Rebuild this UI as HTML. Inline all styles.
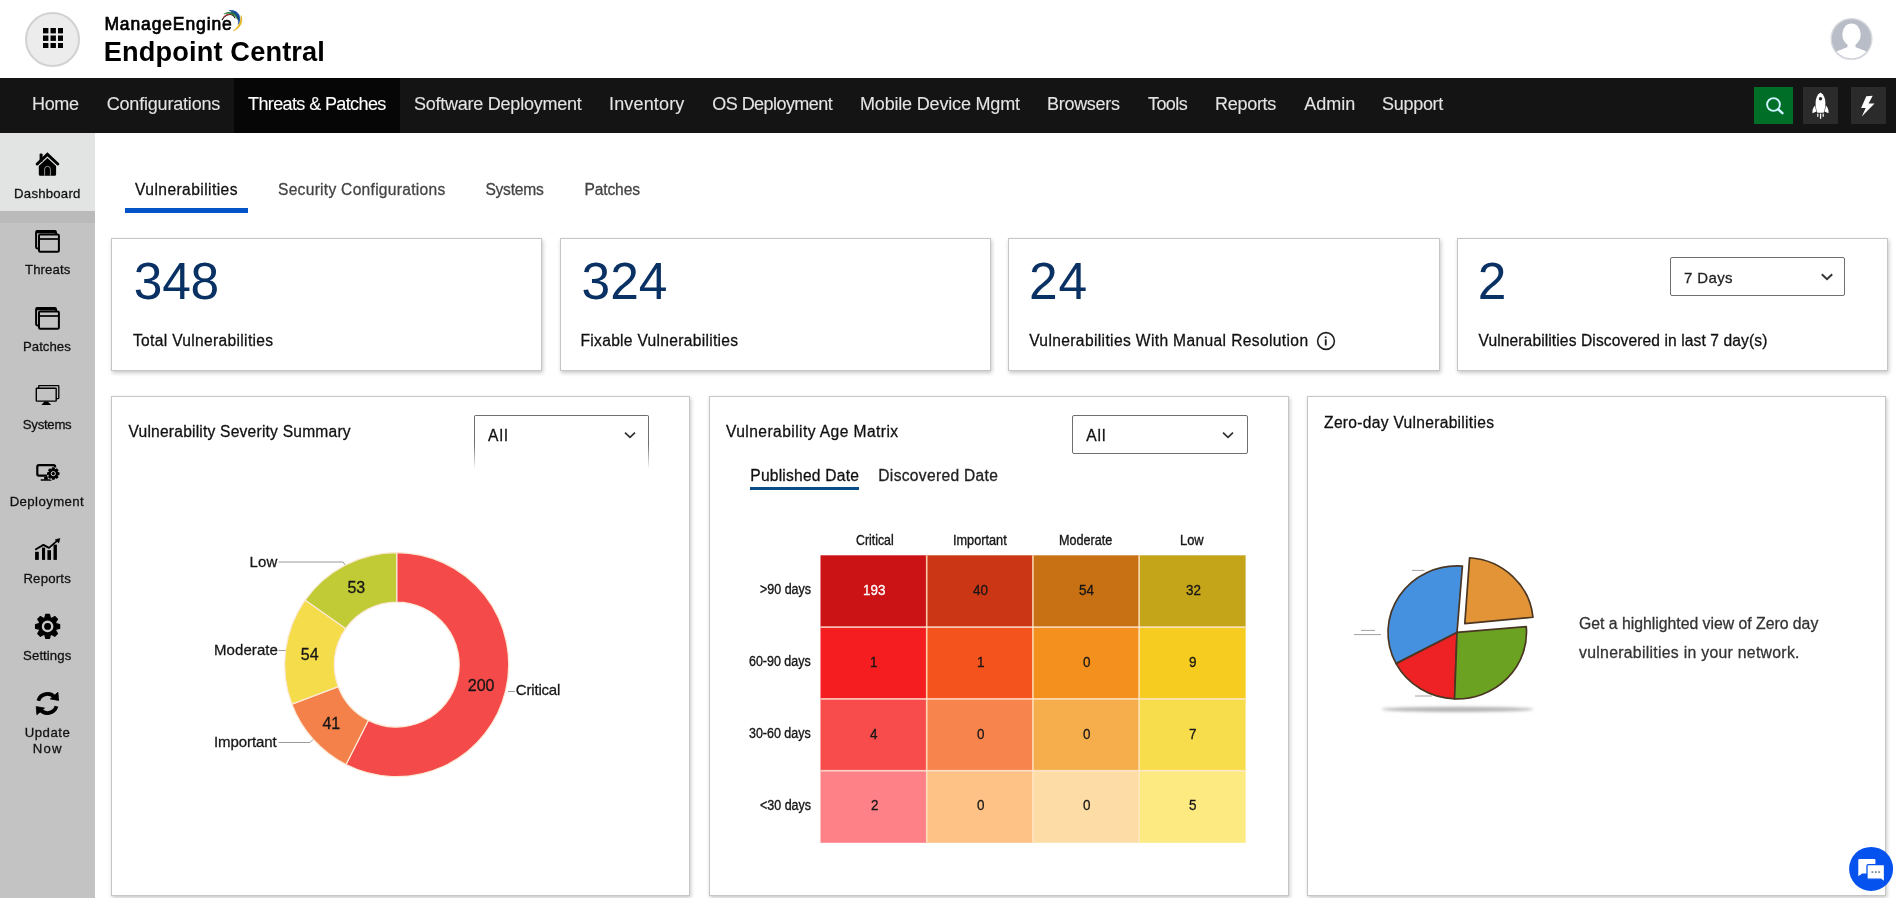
<!DOCTYPE html>
<html lang="en">
<head>
<meta charset="utf-8">
<title>Endpoint Central - Threats &amp; Patches</title>
<style>
*{box-sizing:border-box;margin:0;padding:0}
html,body{width:1896px;height:898px;overflow:hidden;background:#fff;font-family:"Liberation Sans",sans-serif;}
body{position:relative}
.abs{position:absolute}
.tx{position:absolute;white-space:nowrap;font-family:"Liberation Sans",sans-serif;}
header.top{position:absolute;left:0;top:0;width:1896px;height:78px;background:#fff}
nav.main{position:absolute;left:0;top:78px;width:1896px;height:54.6px;background:#141414}
nav.main .active{position:absolute;left:234px;top:0;width:166px;height:54.6px;background:#060606}
aside.side{position:absolute;left:0;top:132.6px;width:95.2px;height:766px;background:#c3c3c3}
aside.side .sel{position:absolute;left:0;top:0;width:95.2px;height:78.4px;background:#e2e3e3}
aside.side .band{position:absolute;left:0;top:78.4px;width:95.2px;height:12px;background:#bababa}
.card{position:absolute;background:#fff;border:1px solid #c6c6c6;box-shadow:1px 2px 4px rgba(0,0,0,.22)}
.sel-box{position:absolute;border:1px solid #6f6f6f;border-radius:2px;background:#fff}
.tabline{position:absolute;left:125px;top:208px;width:123px;height:5px;background:#0553c8}
.subline{position:absolute;left:750px;top:486.8px;width:109px;height:3.2px;background:#0a4d86}
</style>
</head>
<body>
<!-- ===== header ===== -->
<header class="top">
  <div class="abs" style="left:25px;top:12px;width:55px;height:55px;border-radius:50%;background:#ececec;border:2px solid #d2d2d2"></div>
  <svg class="abs" style="left:42.9px;top:28.1px" width="20.4" height="20.4" viewBox="0 0 20.4 20.4">
    <g fill="#000"><rect x="0" y="0" width="5.4" height="5.4"/><rect x="7.5" y="0" width="5.4" height="5.4"/><rect x="15" y="0" width="5.4" height="5.4"/>
    <rect x="0" y="7.5" width="5.4" height="5.4"/><rect x="7.5" y="7.5" width="5.4" height="5.4"/><rect x="15" y="7.5" width="5.4" height="5.4"/>
    <rect x="0" y="15" width="5.4" height="5.4"/><rect x="7.5" y="15" width="5.4" height="5.4"/><rect x="15" y="15" width="5.4" height="5.4"/></g>
  </svg>
  <svg class="abs" style="left:0;top:0" width="1896" height="898" viewBox="0 0 1896 898"><g stroke-linecap="round"><path d="M222.2 19.7 C224.3 15.6 228.6 13.6 231.8 14.7 C233.2 15.2 234.3 16.4 234.9 17.7" fill="none" stroke="#141414" stroke-width="1.1"/><path d="M223.3 17.3 C225.8 14.5 229.6 13.5 232.6 14.5" fill="none" stroke="#e3262a" stroke-width="1"/><path d="M224.2 13.8 C229 10.9 234.2 12.4 236.5 16.4 C237 17.4 237.3 18.4 237.4 19.4 C235.6 15.4 231.2 12.6 224.2 13.8 Z" fill="#1f7d3c" stroke="#1f7d3c" stroke-width="0.5"/><path d="M229.4 10.5 C235.6 9.5 240.4 14 240 19.4 C239.9 21.4 239.3 23 238.3 24.5 C239 19.4 237 13.2 229.4 10.5 Z" fill="#14549c" stroke="#14549c" stroke-width="0.5"/><path d="M231.2 12 C235 12.8 237.8 15.6 238.2 19.2" fill="none" stroke="#0e1a26" stroke-width="0.7"/><path d="M241.2 16 C243.6 22 240 28.6 233.2 30.8 C238.4 27.4 240.8 22.2 241.2 16 Z" fill="#e3b41c" stroke="#e3b41c" stroke-width="0.6"/></g></svg>
  <svg class="abs" style="left:1829px;top:16px" width="46" height="46" viewBox="0 0 46 46"><defs><clipPath id="avc"><circle cx="22.5" cy="23" r="19.4"/></clipPath></defs><circle cx="22.5" cy="23" r="20.4" fill="#b9bdc7" stroke="#d9dbdf" stroke-width="1.4"/><g clip-path="url(#avc)" fill="#fff"><ellipse cx="22.5" cy="18.5" rx="9.2" ry="11"/><path d="M18.5 26 H26.5 V31 C30 33 36 34 39 37 V46 H6 V37 C9 34 15 33 18.5 31 Z"/></g></svg>
</header>
<!-- ===== main nav ===== -->
<nav class="main">
  <div class="active"></div>
  <div class="abs" style="left:1754px;top:9.2px;width:39.2px;height:36.8px;background:#006e27"></div><div class="abs" style="left:1803.2px;top:9.2px;width:34.8px;height:36.8px;background:#2b2b2b"></div><div class="abs" style="left:1851px;top:9.2px;width:35px;height:36.8px;background:#2b2b2b"></div><svg class="abs" style="left:0;top:-78px" width="1896" height="140" viewBox="0 0 1896 140"><circle cx="1773.5" cy="104.5" r="6.4" fill="none" stroke="#cdf5ff" stroke-width="1.9"/><path d="M1778.3 109.4 L1782.4 113.2" stroke="#cdf5ff" stroke-width="2.5" stroke-linecap="round"/><g fill="#fff"><path d="M1820.5 92.6 C1823.8 94.6 1825.4 98.6 1825.4 103 C1825.4 107 1824.6 110.4 1823.6 112.8 H1817.4 C1816.4 110.4 1815.6 107 1815.6 103 C1815.6 98.6 1817.2 94.6 1820.5 92.6 Z"/><path d="M1815.2 105.4 C1813 107.4 1812.2 110 1812.5 113.2 L1816.6 111.6 C1815.8 109.6 1815.3 107.6 1815.2 105.4 Z"/><path d="M1825.8 105.4 C1828 107.4 1828.8 110 1828.5 113.2 L1824.4 111.6 C1825.2 109.6 1825.7 107.6 1825.8 105.4 Z"/><rect x="1819.9" y="113.6" width="1.3" height="5.2"/><rect x="1817.2" y="113.6" width="1.2" height="3.2"/><rect x="1822.6" y="113.6" width="1.2" height="3.2"/></g><circle cx="1820.5" cy="98.8" r="1.7" fill="#2b2b2b"/><path d="M1866.3 96.2 L1872.7 95.8 L1868.6 103.6 L1874.5 103.6 L1861.8 116.4 L1865.7 108 L1861.1 108 Z" fill="#fff"/></svg>
</nav>
<!-- ===== sidebar ===== -->
<aside class="side">
  <div class="sel"></div>
  <div class="band"></div>
</aside>
<svg class="abs" style="left:0;top:0" width="1896" height="898" viewBox="0 0 1896 898"><path d="M37.2 164 L47.4 154.4 L57.8 164" stroke="#000" stroke-width="3" stroke-linecap="round" stroke-linejoin="miter" fill="none"/><rect x="39.6" y="153.4" width="3" height="8.5" rx="1.2" fill="#000"/><path d="M38.8 166 L47.4 157.9 L56.1 166 V174.6 a1.1 1.1 0 0 1 -1.1 1.1 H39.9 a1.1 1.1 0 0 1 -1.1 -1.1 Z" fill="#000"/><path d="M44.6 175.7 V169.2 a2.9 2.9 0 0 1 5.8 0 V175.7" stroke="#b8b8b8" stroke-width="0.8" fill="none"/><g transform="translate(0,0)"><rect x="36.1" y="231" width="19.9" height="17.4" rx="1.3" fill="none" stroke="#000" stroke-width="2"/><path d="M36 232 H56" stroke="#000" stroke-width="2.6"/><rect x="39" y="234.4" width="19.9" height="17.4" rx="1.3" fill="#c3c3c3" stroke="#000" stroke-width="2"/><path d="M39 239 H59" stroke="#000" stroke-width="1.7"/></g><g transform="translate(0,77)"><rect x="36.1" y="231" width="19.9" height="17.4" rx="1.3" fill="none" stroke="#000" stroke-width="2"/><path d="M36 232 H56" stroke="#000" stroke-width="2.6"/><rect x="39" y="234.4" width="19.9" height="17.4" rx="1.3" fill="#c3c3c3" stroke="#000" stroke-width="2"/><path d="M39 239 H59" stroke="#000" stroke-width="1.7"/></g><rect x="38.7" y="385.7" width="20.1" height="12.9" rx="0.5" fill="none" stroke="#000" stroke-width="1.3"/><rect x="36.3" y="388.3" width="19.9" height="12.8" rx="0.5" fill="#c3c3c3" stroke="#000" stroke-width="1.4"/><path d="M44.4 401.6 H47.8 L51.2 404.9 H41.4 Z" fill="#000"/><rect x="37.3" y="465.1" width="17.8" height="10.6" rx="1.6" fill="none" stroke="#000" stroke-width="2.2"/><rect x="44.2" y="476.5" width="3.6" height="3.2" fill="#000"/><path d="M41.2 480 H51" stroke="#000" stroke-width="1.4" stroke-linecap="round"/><circle cx="53.3" cy="473.6" r="6.6" fill="#c3c3c3"/><path d="M52.06 469.69 L52.43 467.97 L54.17 467.97 L54.54 469.69 L55.19 469.96 L56.67 469.00 L57.90 470.23 L56.94 471.71 L57.21 472.36 L58.93 472.73 L58.93 474.47 L57.21 474.84 L56.94 475.49 L57.90 476.97 L56.67 478.20 L55.19 477.24 L54.54 477.51 L54.17 479.23 L52.43 479.23 L52.06 477.51 L51.41 477.24 L49.93 478.20 L48.70 476.97 L49.66 475.49 L49.39 474.84 L47.67 474.47 L47.67 472.73 L49.39 472.36 L49.66 471.71 L48.70 470.23 L49.93 469.00 L51.41 469.96Z" fill="#000" stroke="#000" stroke-width="1.2" stroke-linejoin="round"/><circle cx="53.3" cy="473.6" r="2.1" fill="#000" stroke="#d0d0d0" stroke-width="1"/><g fill="#000"><rect x="35.1" y="551.8" width="3.7" height="8.1"/><rect x="42" y="547.6" width="3.1" height="12.3"/><rect x="47.4" y="550.2" width="3.6" height="9.7"/><rect x="53.5" y="544.6" width="3.4" height="15.3"/><path d="M59.9 538.4 L55.2 539.8 L58.8 542.9 Z" stroke="#000" stroke-width="0.6" stroke-linejoin="round"/></g><path d="M35.9 549.3 L43.4 544.9 L49 547.9 L57.3 540.6" fill="none" stroke="#000" stroke-width="1.9" stroke-linecap="round" stroke-linejoin="round"/><path d="M44.88 617.82 L45.69 614.35 L49.51 614.35 L50.32 617.82 L51.74 618.41 L54.77 616.53 L57.47 619.23 L55.59 622.26 L56.18 623.68 L59.65 624.49 L59.65 628.31 L56.18 629.12 L55.59 630.54 L57.47 633.57 L54.77 636.27 L51.74 634.39 L50.32 634.98 L49.51 638.45 L45.69 638.45 L44.88 634.98 L43.46 634.39 L40.43 636.27 L37.73 633.57 L39.61 630.54 L39.02 629.12 L35.55 628.31 L35.55 624.49 L39.02 623.68 L39.61 622.26 L37.73 619.23 L40.43 616.53 L43.46 618.41Z" fill="#000" stroke="#000" stroke-width="1.2" stroke-linejoin="round"/><circle cx="47.6" cy="626.4" r="4.65" fill="#000" stroke="#c8c8c8" stroke-width="2.4"/><g fill="none" stroke="#000" stroke-width="3.8"><path d="M38.32 700.72 A9.5 9.5 0 0 1 54.89 697.65"/><path d="M56.48 706.28 A9.5 9.5 0 0 1 39.91 709.35"/></g><path d="M57.9 692.3 L58.6 700.4 L50.3 698.9 Z" fill="#000" stroke="#000" stroke-width="0.8" stroke-linejoin="round"/><path d="M36.9 714.7 L36.2 706.6 L44.5 708.1 Z" fill="#000" stroke="#000" stroke-width="0.8" stroke-linejoin="round"/></svg>
<!-- ===== tabs ===== -->
<div class="tabline"></div>
<!-- ===== stat cards ===== -->
<section class="card" style="left:111px;top:238px;width:430.5px;height:133px"></section>
<section class="card" style="left:560px;top:238px;width:430.5px;height:133px"></section>
<section class="card" style="left:1008px;top:238px;width:431.5px;height:133px"></section>
<section class="card" style="left:1457px;top:238px;width:431px;height:133px"></section>
<div class="sel-box" style="left:1670px;top:257px;width:175px;height:39px"></div>
<svg class="abs" style="left:1819px;top:271px" width="16" height="12" viewBox="0 0 16 12"><path d="M2.8 3.3 L8 8.3 L13.2 3.3" fill="none" stroke="#333" stroke-width="1.9"/></svg>
<svg class="abs" style="left:1314px;top:329px" width="24" height="24" viewBox="1314 329 24 24"><circle cx="1326" cy="341" r="8.4" fill="none" stroke="#222" stroke-width="1.6"/><circle cx="1325.7" cy="337.3" r="1" fill="#222"/><rect x="1324.8" y="339.3" width="1.9" height="6.2" fill="#222"/></svg>
<!-- ===== panels ===== -->
<section class="card" style="left:111px;top:396px;width:579px;height:500px"></section>
<section class="card" style="left:709px;top:396px;width:579.5px;height:500px"></section>
<section class="card" style="left:1307px;top:396px;width:579px;height:500px"></section>
<!-- select 1 (fading bottom) -->
<div class="abs" style="left:474px;top:415.4px;width:175px;height:54px;border-top:1px solid #6f6f6f;border-radius:2px"></div>
<div class="abs" style="left:474px;top:416px;width:1px;height:53px;background:linear-gradient(#6f6f6f 0,#6f6f6f 55%,rgba(111,111,111,0) 100%)"></div>
<div class="abs" style="left:648px;top:416px;width:1px;height:53px;background:linear-gradient(#6f6f6f 0,#6f6f6f 55%,rgba(111,111,111,0) 100%)"></div>
<svg class="abs" style="left:622px;top:429px" width="16" height="12" viewBox="0 0 16 12"><path d="M3 3.6 L8 8.3 L13 3.6" fill="none" stroke="#333" stroke-width="1.8"/></svg>
<!-- select 2 -->
<div class="sel-box" style="left:1072px;top:415.4px;width:175.5px;height:38.2px"></div>
<svg class="abs" style="left:1220px;top:429px" width="16" height="12" viewBox="0 0 16 12"><path d="M3 3.6 L8 8.3 L13 3.6" fill="none" stroke="#333" stroke-width="1.8"/></svg>
<div class="subline"></div>
<svg class="abs" style="left:0;top:0" width="1896" height="898" viewBox="0 0 1896 898"><path d="M396.70 552.60 A112 112 0 1 1 346.03 764.48 L368.43 720.34 A62.5 62.5 0 1 0 396.70 602.10 Z" fill="#f54a4a" stroke="#fbe9d6" stroke-width="1.2" stroke-linejoin="round"/><path d="M346.03 764.48 A112 112 0 0 1 291.92 704.17 L338.23 686.68 A62.5 62.5 0 0 0 368.43 720.34 Z" fill="#f4814a" stroke="#fbe9d6" stroke-width="1.2" stroke-linejoin="round"/><path d="M291.92 704.17 A112 112 0 0 1 305.15 600.08 L345.61 628.60 A62.5 62.5 0 0 0 338.23 686.68 Z" fill="#f5dc4a" stroke="#fbe9d6" stroke-width="1.2" stroke-linejoin="round"/><path d="M305.15 600.08 A112 112 0 0 1 396.70 552.60 L396.70 602.10 A62.5 62.5 0 0 0 345.61 628.60 Z" fill="#c1cb35" stroke="#fbe9d6" stroke-width="1.2" stroke-linejoin="round"/><g fill="none" stroke="#9a9a9a" stroke-width="1"><path d="M278.5 562 H343.2 L345 564.8"/><path d="M278.5 650.5 H285.5"/><path d="M278.5 742.5 H310 L313 739.5"/><path d="M508 691.5 H515"/></g></svg>
<svg class="abs" style="left:0;top:0" width="1896" height="898" viewBox="0 0 1896 898"><rect x="820.50" y="555.30" width="106.50" height="72.10" fill="#cb1215"/><rect x="926.70" y="555.30" width="106.50" height="72.10" fill="#cb3714"/><rect x="1032.90" y="555.30" width="106.50" height="72.10" fill="#c87114"/><rect x="1139.10" y="555.30" width="106.50" height="72.10" fill="#c4a51a"/><rect x="820.50" y="627.10" width="106.50" height="72.10" fill="#f51d20"/><rect x="926.70" y="627.10" width="106.50" height="72.10" fill="#f4531e"/><rect x="1032.90" y="627.10" width="106.50" height="72.10" fill="#f4901d"/><rect x="1139.10" y="627.10" width="106.50" height="72.10" fill="#f5cc1f"/><rect x="820.50" y="698.90" width="106.50" height="72.10" fill="#f84c4c"/><rect x="926.70" y="698.90" width="106.50" height="72.10" fill="#f7844c"/><rect x="1032.90" y="698.90" width="106.50" height="72.10" fill="#f6ae4c"/><rect x="1139.10" y="698.90" width="106.50" height="72.10" fill="#f7dc4c"/><rect x="820.50" y="770.70" width="106.50" height="72.10" fill="#fe8187"/><rect x="926.70" y="770.70" width="106.50" height="72.10" fill="#fec286"/><rect x="1032.90" y="770.70" width="106.50" height="72.10" fill="#fedca6"/><rect x="1139.10" y="770.70" width="106.50" height="72.10" fill="#fdea80"/><rect x="925.90" y="555.3" width="1.6" height="287.20" fill="#ffe9c9" fill-opacity=".85"/><rect x="1032.10" y="555.3" width="1.6" height="287.20" fill="#ffe9c9" fill-opacity=".85"/><rect x="1138.30" y="555.3" width="1.6" height="287.20" fill="#ffe9c9" fill-opacity=".85"/><rect x="820.5" y="626.30" width="424.80" height="1.6" fill="#ffe9d9" fill-opacity=".85"/><rect x="820.5" y="698.10" width="424.80" height="1.6" fill="#ffe9d9" fill-opacity=".85"/><rect x="820.5" y="769.90" width="424.80" height="1.6" fill="#ffe9d9" fill-opacity=".85"/></svg>
<svg class="abs" style="left:0;top:0" width="1896" height="898" viewBox="0 0 1896 898"><defs><filter id="blr" x="-20%" y="-300%" width="140%" height="700%"><feGaussianBlur stdDeviation="1.6"/></filter></defs><ellipse cx="1457.5" cy="709.3" rx="76" ry="2.6" fill="#b4b4b4" filter="url(#blr)"/><path d="M1457 632.4 L1396.08 663.62 A69 66.5 0 0 1 1462.41 566.10 Z" fill="#4591e0" stroke="#4a3622" stroke-width="1.7" stroke-linejoin="round"/><path d="M1457 632.4 L1454.59 698.86 A69 66.5 0 0 1 1396.08 663.62 Z" fill="#ee2225" stroke="#4a3622" stroke-width="1.7" stroke-linejoin="round"/><path d="M1457 632.4 L1526.24 626.60 A69.5 66.5 0 0 1 1454.57 698.86 Z" fill="#6ba222" stroke="#4a3622" stroke-width="1.7" stroke-linejoin="round"/><path d="M1464.8 623.6 L1469.58 557.76 A68.5 66 0 0 1 1532.98 617.27 Z" fill="#e39436" stroke="#4a3622" stroke-width="1.7" stroke-linejoin="round"/><g stroke="#8a8a8a" stroke-width="1" fill="none" opacity=".8"><path d="M1412 570.4 H1424.5"/><path d="M1354 634.6 H1381"/><path d="M1361 630.4 H1375"/><path d="M1415 696 H1432"/></g></svg>
<svg class="abs" style="left:1846px;top:844px" width="50" height="50" viewBox="1846 844 50 50"><circle cx="1871.1" cy="868.9" r="22" fill="#0552ee"/><path d="M1859.3 859 H1874.4 a1 1 0 0 1 1 1 V872.4 a1 1 0 0 1 -1 1 H1862.2 L1858.3 876.2 V860 a1 1 0 0 1 1 -1 Z" fill="#fff"/><path d="M1868.2 864.6 H1883.3 a1.2 1.2 0 0 1 1.2 1.2 V882 L1880.8 879.2 H1868.2 a1.2 1.2 0 0 1 -1.2 -1.2 V865.8 a1.2 1.2 0 0 1 1.2 -1.2 Z" fill="#fff" stroke="#0552ee" stroke-width="1.3"/><g fill="#7a8a9a"><rect x="1871.5" y="871.2" width="1.8" height="1.8"/><rect x="1874.9" y="871.2" width="1.8" height="1.8"/><rect x="1878.3" y="871.2" width="1.8" height="1.8"/></g></svg>
<!-- ===== text ===== -->
<div id="txt" style="position:absolute;left:0;top:0;width:1896px;height:898px;will-change:transform">
<span class="tx" style="left:104.40px;top:13px;font-size:17.5px;line-height:22px;letter-spacing:0.873px;color:#000;-webkit-text-stroke:0.7px #000;">ManageEngine</span>
<span class="tx" style="left:103.80px;top:35px;font-size:27.2px;line-height:33px;letter-spacing:0.137px;color:#000;font-weight:700;">Endpoint Central</span>
<span class="tx" style="left:32.00px;top:93px;font-size:18px;line-height:22px;letter-spacing:-0.335px;color:#e4e4e4;-webkit-text-stroke:0.1px;">Home</span>
<span class="tx" style="left:106.70px;top:93px;font-size:18px;line-height:22px;letter-spacing:-0.190px;color:#e4e4e4;-webkit-text-stroke:0.1px;">Configurations</span>
<span class="tx" style="left:248.00px;top:93px;font-size:18px;line-height:22px;letter-spacing:-0.611px;color:#ffffff;-webkit-text-stroke:0.1px;">Threats &amp; Patches</span>
<span class="tx" style="left:414.00px;top:93px;font-size:18px;line-height:22px;letter-spacing:-0.243px;color:#e4e4e4;-webkit-text-stroke:0.1px;">Software Deployment</span>
<span class="tx" style="left:609.00px;top:93px;font-size:18px;line-height:22px;letter-spacing:0.158px;color:#e4e4e4;-webkit-text-stroke:0.1px;">Inventory</span>
<span class="tx" style="left:712.30px;top:93px;font-size:18px;line-height:22px;letter-spacing:-0.554px;color:#e4e4e4;-webkit-text-stroke:0.1px;">OS Deployment</span>
<span class="tx" style="left:860.00px;top:93px;font-size:18px;line-height:22px;letter-spacing:-0.179px;color:#e4e4e4;-webkit-text-stroke:0.1px;">Mobile Device Mgmt</span>
<span class="tx" style="left:1047.00px;top:93px;font-size:18px;line-height:22px;letter-spacing:-0.288px;color:#e4e4e4;-webkit-text-stroke:0.1px;">Browsers</span>
<span class="tx" style="left:1148.00px;top:93px;font-size:18px;line-height:22px;letter-spacing:-0.580px;color:#e4e4e4;-webkit-text-stroke:0.1px;">Tools</span>
<span class="tx" style="left:1215.00px;top:93px;font-size:18px;line-height:22px;letter-spacing:-0.288px;color:#e4e4e4;-webkit-text-stroke:0.1px;">Reports</span>
<span class="tx" style="left:1304.30px;top:93px;font-size:18px;line-height:22px;letter-spacing:-0.027px;color:#e4e4e4;-webkit-text-stroke:0.1px;">Admin</span>
<span class="tx" style="left:1382.00px;top:93px;font-size:18px;line-height:22px;letter-spacing:-0.290px;color:#e4e4e4;-webkit-text-stroke:0.1px;">Support</span>
<span class="tx" style="left:14.10px;top:185px;font-size:13.2px;line-height:17px;letter-spacing:0.215px;color:#111;-webkit-text-stroke:0.28px #111;">Dashboard</span>
<span class="tx" style="left:25.00px;top:261px;font-size:13.2px;line-height:17px;letter-spacing:0.098px;color:#111;-webkit-text-stroke:0.28px #111;">Threats</span>
<span class="tx" style="left:23.00px;top:338px;font-size:13.2px;line-height:17px;letter-spacing:0.024px;color:#111;-webkit-text-stroke:0.28px #111;">Patches</span>
<span class="tx" style="left:22.80px;top:416px;font-size:13.2px;line-height:17px;letter-spacing:-0.278px;color:#111;-webkit-text-stroke:0.28px #111;">Systems</span>
<span class="tx" style="left:9.70px;top:493px;font-size:13.2px;line-height:17px;letter-spacing:0.400px;color:#111;-webkit-text-stroke:0.28px #111;">Deployment</span>
<span class="tx" style="left:23.40px;top:570px;font-size:13.2px;line-height:17px;letter-spacing:0.203px;color:#111;-webkit-text-stroke:0.28px #111;">Reports</span>
<span class="tx" style="left:23.10px;top:647px;font-size:13.2px;line-height:17px;letter-spacing:0.078px;color:#111;-webkit-text-stroke:0.28px #111;">Settings</span>
<span class="tx" style="left:24.80px;top:724px;font-size:13.2px;line-height:17px;letter-spacing:0.482px;color:#111;-webkit-text-stroke:0.28px #111;">Update</span>
<span class="tx" style="left:32.80px;top:740px;font-size:13.2px;line-height:17px;letter-spacing:1.171px;color:#111;-webkit-text-stroke:0.28px #111;">Now</span>
<span class="tx" style="left:135.10px;top:180px;font-size:15.6px;line-height:19px;letter-spacing:0.421px;color:#111;-webkit-text-stroke:0.28px #111;">Vulnerabilities</span>
<span class="tx" style="left:278.00px;top:180px;font-size:15.6px;line-height:19px;letter-spacing:0.272px;color:#444;-webkit-text-stroke:0.28px #444;">Security Configurations</span>
<span class="tx" style="left:485.40px;top:180px;font-size:15.6px;line-height:19px;letter-spacing:-0.232px;color:#444;-webkit-text-stroke:0.28px #444;">Systems</span>
<span class="tx" style="left:584.40px;top:180px;font-size:15.6px;line-height:19px;letter-spacing:-0.125px;color:#444;-webkit-text-stroke:0.28px #444;">Patches</span>
<span class="tx" style="left:133.70px;top:251px;font-size:51.5px;line-height:60px;letter-spacing:-0.192px;color:#0a3164;">348</span>
<span class="tx" style="left:581.60px;top:251px;font-size:51.5px;line-height:60px;letter-spacing:-0.092px;color:#0a3164;">324</span>
<span class="tx" style="left:1028.90px;top:251px;font-size:51.5px;line-height:60px;letter-spacing:1.058px;color:#0a3164;">24</span>
<span class="tx" style="left:1477.70px;top:251px;font-size:51.5px;line-height:60px;letter-spacing:0.000px;color:#0a3164;">2</span>
<span class="tx" style="left:133.00px;top:331px;font-size:15.6px;line-height:19px;letter-spacing:0.316px;color:#111;-webkit-text-stroke:0.28px #111;">Total Vulnerabilities</span>
<span class="tx" style="left:580.50px;top:331px;font-size:15.6px;line-height:19px;letter-spacing:0.295px;color:#111;-webkit-text-stroke:0.28px #111;">Fixable Vulnerabilities</span>
<span class="tx" style="left:1029.20px;top:331px;font-size:15.6px;line-height:19px;letter-spacing:0.361px;color:#111;-webkit-text-stroke:0.28px #111;">Vulnerabilities With Manual Resolution</span>
<span class="tx" style="left:1478.50px;top:331px;font-size:15.6px;line-height:19px;letter-spacing:0.103px;color:#111;-webkit-text-stroke:0.28px #111;">Vulnerabilities Discovered in last 7 day(s)</span>
<span class="tx" style="left:1684.00px;top:268px;font-size:15px;line-height:19px;letter-spacing:0.363px;color:#222;-webkit-text-stroke:0.28px #222;">7 Days</span>
<span class="tx" style="left:128.50px;top:422px;font-size:15.6px;line-height:19px;letter-spacing:0.208px;color:#111;-webkit-text-stroke:0.28px #111;">Vulnerability Severity Summary</span>
<span class="tx" style="left:488.10px;top:426px;font-size:15.6px;line-height:19px;letter-spacing:1.117px;color:#111;-webkit-text-stroke:0.28px #111;">All</span>
<span class="tx" style="left:726.00px;top:422px;font-size:15.6px;line-height:19px;letter-spacing:0.425px;color:#111;-webkit-text-stroke:0.28px #111;">Vulnerability Age Matrix</span>
<span class="tx" style="left:1086.20px;top:426px;font-size:15.6px;line-height:19px;letter-spacing:0.917px;color:#111;-webkit-text-stroke:0.28px #111;">All</span>
<span class="tx" style="left:750.30px;top:466px;font-size:15.6px;line-height:19px;letter-spacing:0.216px;color:#111;-webkit-text-stroke:0.28px #111;">Published Date</span>
<span class="tx" style="left:878.30px;top:466px;font-size:15.6px;line-height:19px;letter-spacing:0.307px;color:#222;-webkit-text-stroke:0.28px #222;">Discovered Date</span>
<span class="tx" style="left:1324.10px;top:413px;font-size:15.6px;line-height:19px;letter-spacing:0.290px;color:#111;-webkit-text-stroke:0.28px #111;">Zero-day Vulnerabilities</span>
<span class="tx" style="left:1579.00px;top:614px;font-size:15.8px;line-height:19px;letter-spacing:-0.013px;color:#333;-webkit-text-stroke:0.28px #333;">Get a highlighted view of Zero day</span>
<span class="tx" style="left:1579.00px;top:643px;font-size:15.8px;line-height:19px;letter-spacing:0.287px;color:#333;-webkit-text-stroke:0.28px #333;">vulnerabilities in your network.</span>
<span class="tx" style="left:249.50px;top:552px;font-size:15px;line-height:19px;letter-spacing:0.208px;color:#161616;-webkit-text-stroke:0.28px #161616;">Low</span>
<span class="tx" style="left:214.00px;top:640px;font-size:15px;line-height:19px;letter-spacing:0.082px;color:#161616;-webkit-text-stroke:0.28px #161616;">Moderate</span>
<span class="tx" style="left:214.00px;top:732px;font-size:15px;line-height:19px;letter-spacing:-0.074px;color:#161616;-webkit-text-stroke:0.28px #161616;">Important</span>
<span class="tx" style="left:515.80px;top:680px;font-size:15px;line-height:19px;letter-spacing:-0.186px;color:#161616;-webkit-text-stroke:0.28px #161616;">Critical</span>
<span class="tx" style="left:347.45px;top:578px;font-size:16px;line-height:19px;letter-spacing:0.000px;color:#161616;-webkit-text-stroke:0.3px #161616;">53</span>
<span class="tx" style="left:300.85px;top:645px;font-size:16px;line-height:19px;letter-spacing:0.000px;color:#161616;-webkit-text-stroke:0.3px #161616;">54</span>
<span class="tx" style="left:322.45px;top:714px;font-size:16px;line-height:19px;letter-spacing:0.000px;color:#161616;-webkit-text-stroke:0.3px #161616;">41</span>
<span class="tx" style="left:467.80px;top:676px;font-size:16px;line-height:19px;letter-spacing:0.000px;color:#161616;-webkit-text-stroke:0.3px #161616;">200</span>
<span class="tx" style="left:855.60px;top:532px;font-size:13.8px;line-height:17px;letter-spacing:0.000px;color:#161616;-webkit-text-stroke:0.35px #161616;transform:scaleX(0.8933);transform-origin:0 50%;">Critical</span>
<span class="tx" style="left:952.88px;top:532px;font-size:13.8px;line-height:17px;letter-spacing:0.000px;color:#161616;-webkit-text-stroke:0.35px #161616;transform:scaleX(0.9209);transform-origin:0 50%;">Important</span>
<span class="tx" style="left:1059.49px;top:532px;font-size:13.8px;line-height:17px;letter-spacing:0.000px;color:#161616;-webkit-text-stroke:0.35px #161616;transform:scaleX(0.9130);transform-origin:0 50%;">Moderate</span>
<span class="tx" style="left:1180.46px;top:532px;font-size:13.8px;line-height:17px;letter-spacing:0.000px;color:#161616;-webkit-text-stroke:0.35px #161616;transform:scaleX(0.9365);transform-origin:0 50%;">Low</span>
<span class="tx" style="left:759.60px;top:581px;font-size:13.8px;line-height:17px;letter-spacing:0.000px;color:#161616;-webkit-text-stroke:0.35px #161616;transform:scaleX(0.9047);transform-origin:0 50%;">&gt;90 days</span>
<span class="tx" style="left:748.90px;top:653px;font-size:13.8px;line-height:17px;letter-spacing:0.000px;color:#161616;-webkit-text-stroke:0.35px #161616;transform:scaleX(0.9040);transform-origin:0 50%;">60-90 days</span>
<span class="tx" style="left:748.90px;top:725px;font-size:13.8px;line-height:17px;letter-spacing:0.000px;color:#161616;-webkit-text-stroke:0.35px #161616;transform:scaleX(0.9040);transform-origin:0 50%;">30-60 days</span>
<span class="tx" style="left:759.60px;top:797px;font-size:13.8px;line-height:17px;letter-spacing:0.000px;color:#161616;-webkit-text-stroke:0.35px #161616;transform:scaleX(0.9047);transform-origin:0 50%;">&lt;30 days</span>
<span class="tx" style="left:862.95px;top:580px;font-size:15.3px;line-height:19px;letter-spacing:0.000px;color:#fff;-webkit-text-stroke:0.3px #fff;transform:scaleX(0.8800);transform-origin:0 50%;">193</span>
<span class="tx" style="left:973.34px;top:580px;font-size:15.3px;line-height:19px;letter-spacing:0.000px;color:#161616;-webkit-text-stroke:0.3px #161616;transform:scaleX(0.8800);transform-origin:0 50%;">40</span>
<span class="tx" style="left:1079.10px;top:580px;font-size:15.3px;line-height:19px;letter-spacing:0.000px;color:#161616;-webkit-text-stroke:0.3px #161616;transform:scaleX(0.8800);transform-origin:0 50%;">54</span>
<span class="tx" style="left:1185.74px;top:580px;font-size:15.3px;line-height:19px;letter-spacing:0.000px;color:#161616;-webkit-text-stroke:0.3px #161616;transform:scaleX(0.8800);transform-origin:0 50%;">32</span>
<span class="tx" style="left:870.44px;top:652px;font-size:15.3px;line-height:19px;letter-spacing:0.000px;color:#161616;-webkit-text-stroke:0.3px #161616;transform:scaleX(0.8800);transform-origin:0 50%;">1</span>
<span class="tx" style="left:976.64px;top:652px;font-size:15.3px;line-height:19px;letter-spacing:0.000px;color:#161616;-webkit-text-stroke:0.3px #161616;transform:scaleX(0.8800);transform-origin:0 50%;">1</span>
<span class="tx" style="left:1083.28px;top:652px;font-size:15.3px;line-height:19px;letter-spacing:0.000px;color:#161616;-webkit-text-stroke:0.3px #161616;transform:scaleX(0.8800);transform-origin:0 50%;">0</span>
<span class="tx" style="left:1189.48px;top:652px;font-size:15.3px;line-height:19px;letter-spacing:0.000px;color:#161616;-webkit-text-stroke:0.3px #161616;transform:scaleX(0.8800);transform-origin:0 50%;">9</span>
<span class="tx" style="left:870.44px;top:724px;font-size:15.3px;line-height:19px;letter-spacing:0.000px;color:#161616;-webkit-text-stroke:0.3px #161616;transform:scaleX(0.8800);transform-origin:0 50%;">4</span>
<span class="tx" style="left:977.08px;top:724px;font-size:15.3px;line-height:19px;letter-spacing:0.000px;color:#161616;-webkit-text-stroke:0.3px #161616;transform:scaleX(0.8800);transform-origin:0 50%;">0</span>
<span class="tx" style="left:1083.28px;top:724px;font-size:15.3px;line-height:19px;letter-spacing:0.000px;color:#161616;-webkit-text-stroke:0.3px #161616;transform:scaleX(0.8800);transform-origin:0 50%;">0</span>
<span class="tx" style="left:1189.48px;top:724px;font-size:15.3px;line-height:19px;letter-spacing:0.000px;color:#161616;-webkit-text-stroke:0.3px #161616;transform:scaleX(0.8800);transform-origin:0 50%;">7</span>
<span class="tx" style="left:870.88px;top:795px;font-size:15.3px;line-height:19px;letter-spacing:0.000px;color:#161616;-webkit-text-stroke:0.3px #161616;transform:scaleX(0.8800);transform-origin:0 50%;">2</span>
<span class="tx" style="left:977.08px;top:795px;font-size:15.3px;line-height:19px;letter-spacing:0.000px;color:#161616;-webkit-text-stroke:0.3px #161616;transform:scaleX(0.8800);transform-origin:0 50%;">0</span>
<span class="tx" style="left:1083.28px;top:795px;font-size:15.3px;line-height:19px;letter-spacing:0.000px;color:#161616;-webkit-text-stroke:0.3px #161616;transform:scaleX(0.8800);transform-origin:0 50%;">0</span>
<span class="tx" style="left:1189.48px;top:795px;font-size:15.3px;line-height:19px;letter-spacing:0.000px;color:#161616;-webkit-text-stroke:0.3px #161616;transform:scaleX(0.8800);transform-origin:0 50%;">5</span>
</div>
</body>
</html>
